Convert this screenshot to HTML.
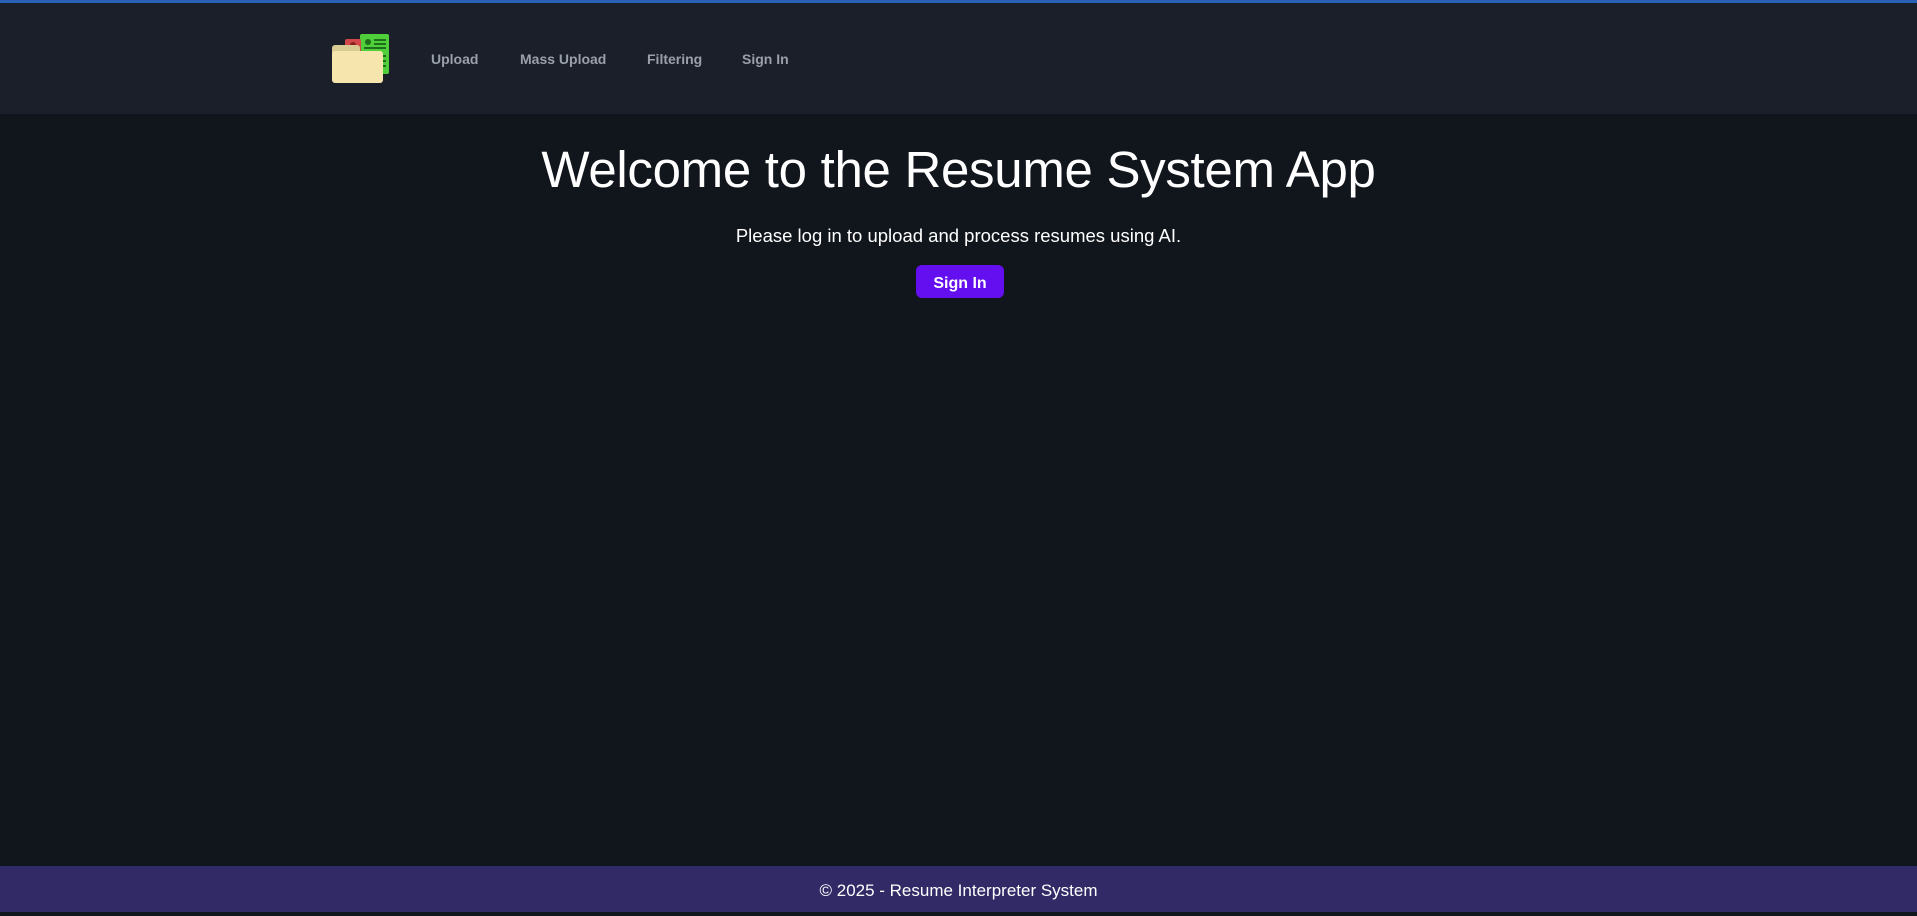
<!DOCTYPE html>
<html><head><meta charset="utf-8">
<style>
html,body{margin:0;padding:0}
body{width:1917px;height:912px;background:#11151c;font-family:"Liberation Sans",sans-serif;position:relative;overflow:hidden;color:#fff}
.top{position:absolute;left:0;top:0;width:100%;height:3px;background:#2b62b5}
header{position:absolute;left:0;top:3px;width:100%;height:111px;background:#1b1f2a}
.nav a{position:absolute;top:47px;color:#9aa0aa;font-weight:bold;font-size:14px;text-decoration:none;line-height:18px}
.logo div{position:absolute}
h1{position:absolute;left:0;width:100%;top:138px;margin:0;text-align:center;font-weight:normal;font-size:51px;line-height:64px;letter-spacing:-0.3px;color:#fff}
p{position:absolute;left:0;width:100%;top:225px;margin:0;text-align:center;font-size:18.5px;line-height:22px}
.btn{position:absolute;left:916px;top:265px;width:88px;height:33px;background:#640ff0;border-radius:6px;color:#fff;font-weight:bold;font-size:16px;line-height:37px;text-align:center}
footer{position:absolute;left:0;top:866px;width:100%;height:46px;background:#312a66;text-align:center;font-size:17px;line-height:50px}
</style></head><body>
<div class="top"></div>
<header>
<div class="logo">
 <div style="left:360px;top:31px;width:29px;height:40px;background:#4fd03a;border-radius:2px"></div>
 <div style="left:365px;top:36px;width:6px;height:6px;background:#1d6d1a;border-radius:50%"></div>
 <div style="left:374px;top:36px;width:12px;height:2px;background:#1d6d1a"></div>
 <div style="left:374px;top:40px;width:12px;height:2px;background:#1d6d1a"></div>
 <div style="left:364px;top:44px;width:22px;height:2px;background:#1d6d1a"></div>
 <div style="left:383px;top:52px;width:3px;height:2px;background:#1d6d1a"></div>
 <div style="left:383px;top:57px;width:3px;height:2px;background:#1d6d1a"></div>
 <div style="left:383px;top:62px;width:3px;height:2px;background:#1d6d1a"></div>
 <div style="left:345px;top:36px;width:16px;height:14px;background:#d24848;border-radius:2px"></div>
 <div style="left:350px;top:39px;width:6px;height:6px;background:#8b2222;border-radius:50%"></div>
 <div style="left:332px;top:42px;width:28px;height:12px;background:#d8cc94;border-radius:3px 3px 0 0"></div>
 <div style="left:332px;top:48px;width:51px;height:32px;background:#f6e5ad;border-radius:3px"></div>
</div>
<nav class="nav">
 <a style="left:431px">Upload</a>
 <a style="left:520px">Mass Upload</a>
 <a style="left:647px">Filtering</a>
 <a style="left:742px">Sign In</a>
</nav>
</header>
<h1>Welcome to the Resume System App</h1>
<p>Please log in to upload and process resumes using AI.</p>
<div class="btn">Sign In</div>
<footer>© 2025 - Resume Interpreter System</footer>
</body></html>
